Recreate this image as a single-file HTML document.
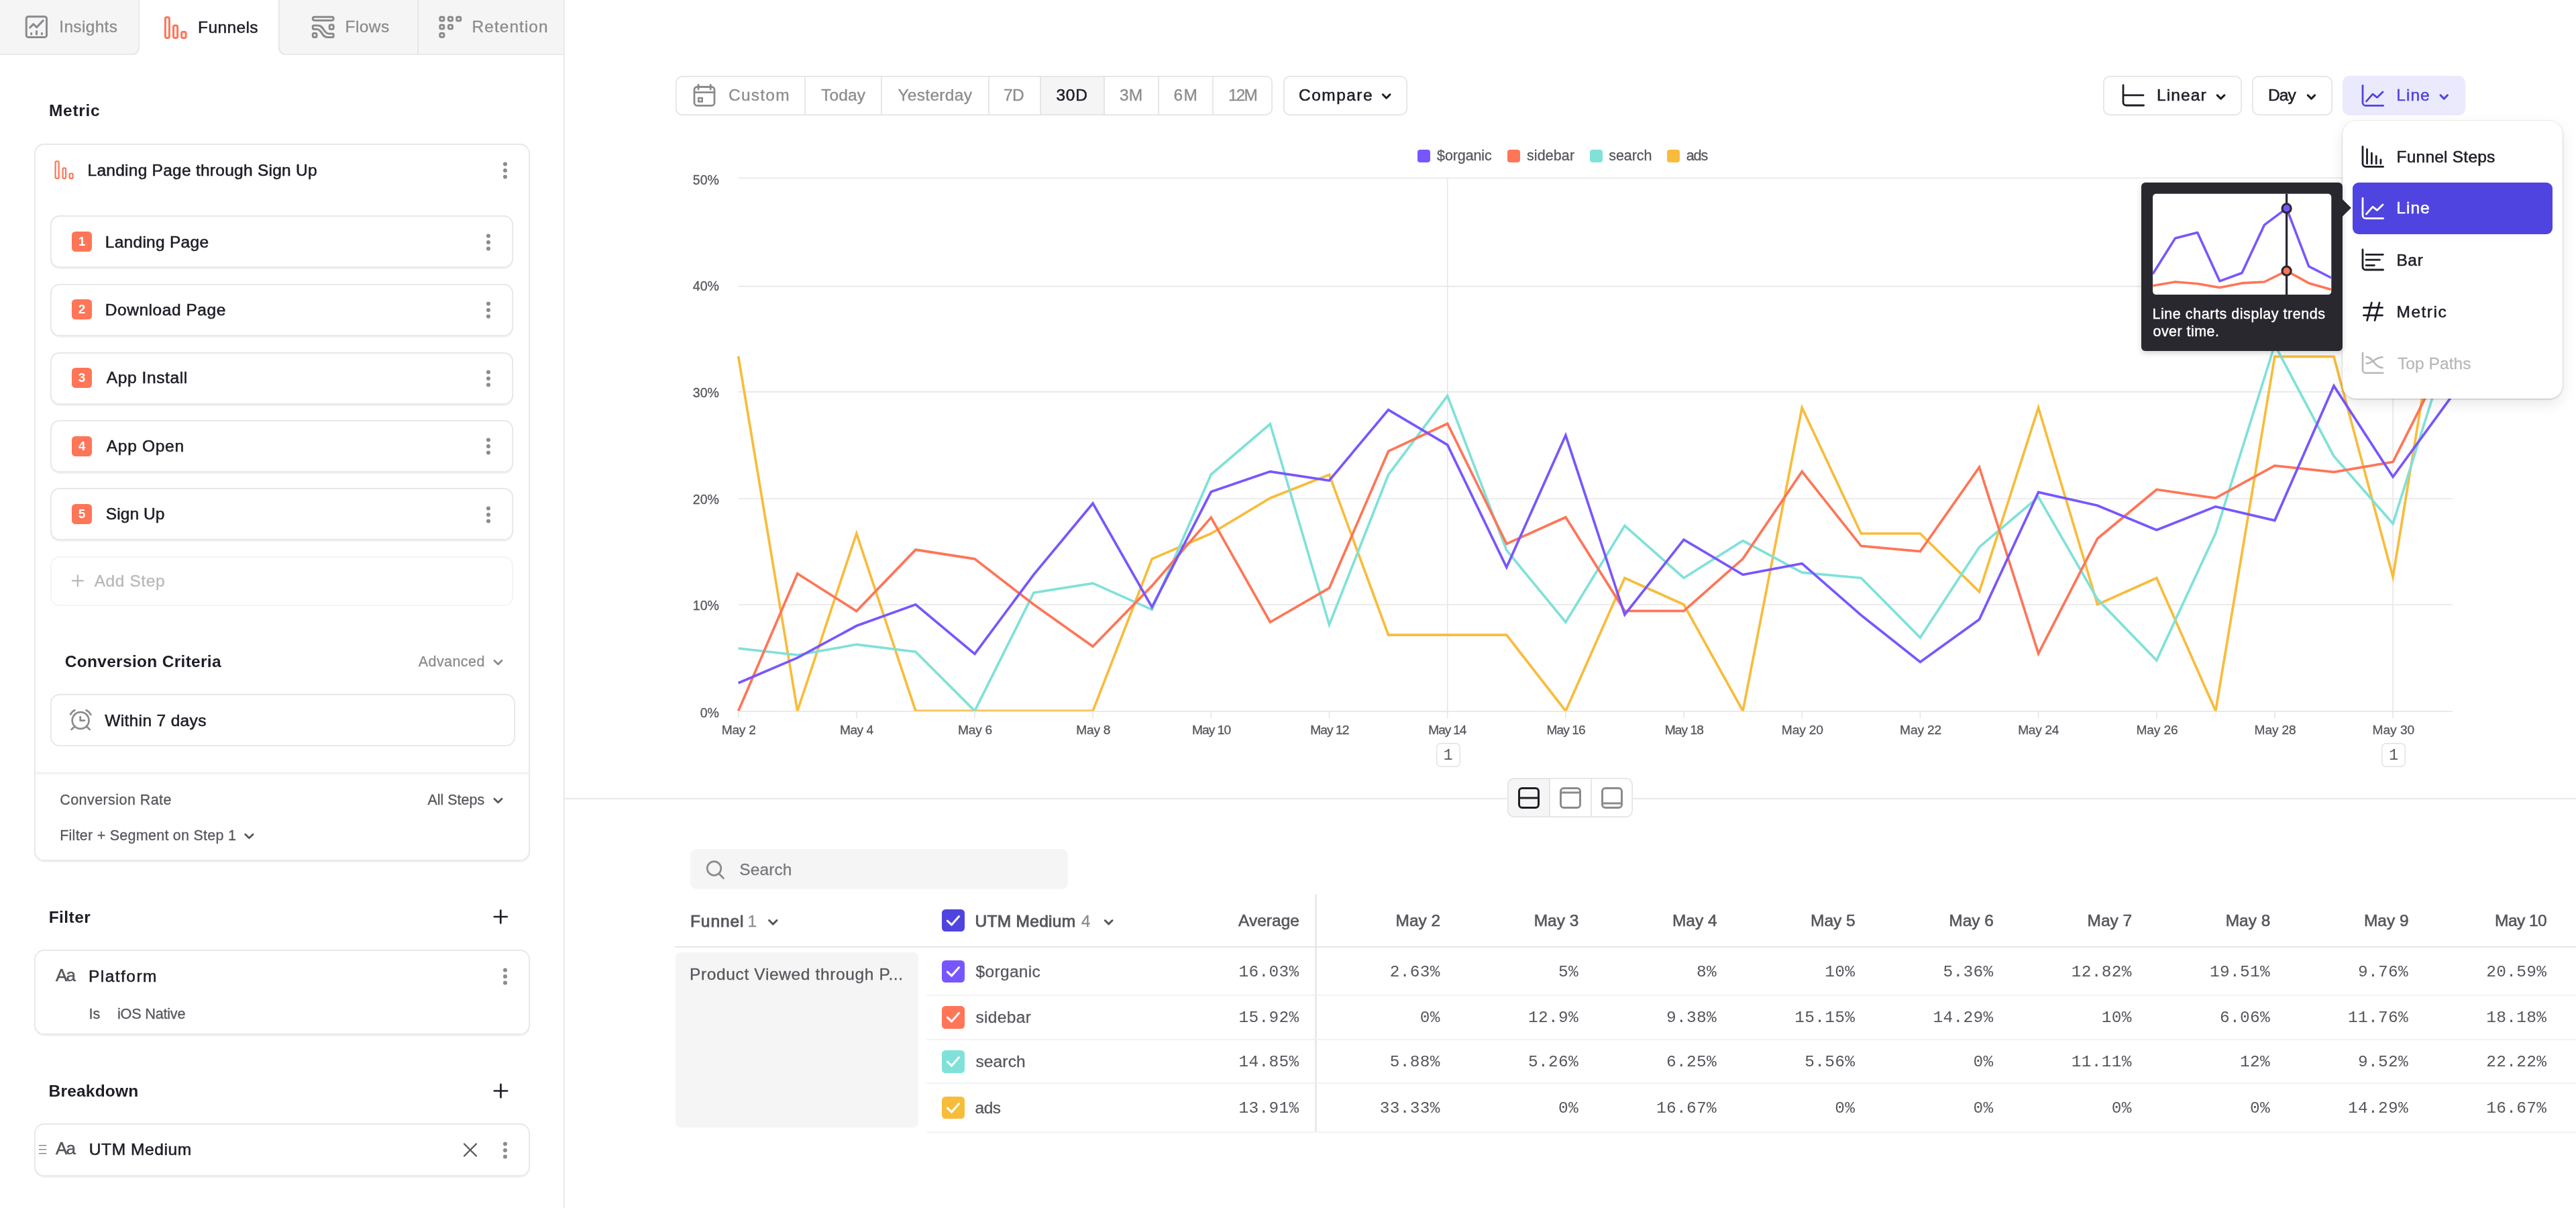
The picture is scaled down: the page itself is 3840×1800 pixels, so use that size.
<!DOCTYPE html>
<html lang="en"><head><meta charset="utf-8"><title>Funnels</title>
<style>
html,body{margin:0;padding:0;background:#fff}
body{width:3840px;height:1800px;overflow:hidden;position:relative;font-family:"Liberation Sans",sans-serif}
section{position:absolute;left:0;top:0;width:0;height:0;will-change:transform}
.t{position:absolute;white-space:pre;display:block}
.f-s{font-family:"Liberation Sans",sans-serif}
.f-m{font-family:"Liberation Mono",monospace}
.ic{position:absolute;overflow:visible}
.tab{position:absolute;background:#f5f5f5;box-sizing:border-box}
.sideborder{position:absolute;left:840px;top:0;width:2px;height:1800px;background:#e9e9e9}
.card{position:absolute;box-sizing:border-box;--bc:#e5e5e5;background:#fff;box-shadow:inset 0 0 0 1.7px var(--bc),0 2px 1.5px rgba(0,0,0,.055)}
.card.flat{box-shadow:inset 0 0 0 1.7px var(--bc)}
.step{border-radius:14px}
.badge{position:absolute;width:30px;height:30px;border-radius:5.5px;background:#FF7557;color:#fff;font-weight:700;font-size:19px;line-height:30px;text-align:center}
.btn{position:absolute;box-sizing:border-box;--bc:#e4e4e4;box-shadow:inset 0 0 0 1.7px var(--bc);border-radius:10px;background:#fff}
.vsep{position:absolute;width:0;box-shadow:0 0 0 0.8px #e2e2e2}
.hline{position:absolute;height:0;box-shadow:0 0 0 0.8px #f1f1f1}
.anno{position:absolute;box-sizing:border-box;width:36.2px;height:36px;box-shadow:inset 0 0 0 1.5px #e2e2e2;border-radius:6.5px;background:#fff}
.cb{position:absolute;width:33.8px;height:33.6px;border-radius:5.5px}
.menu{position:absolute;box-sizing:border-box;background:#fff;border-radius:20px;box-shadow:0 0 0 1px rgba(0,0,0,.05),0 1px 2.5px rgba(0,0,0,.2),0 8px 22px rgba(0,0,0,.09)}
.tip{position:absolute;background:#2a282f;border-radius:6px;box-shadow:0 3px 8px rgba(0,0,0,.18)}
</style></head>
<body>
<section class="sidebar">
<div class="tab" style="left:0;top:0;width:207.6px;height:82.3px;box-shadow:inset -1.6px -1.6px 0 #e6e6e6;border-bottom-right-radius:11px"></div>
<div class="tab" style="left:414.6px;top:0;width:426.4px;height:82.3px;box-shadow:inset 1.6px -1.6px 0 #e6e6e6;border-bottom-left-radius:11px"></div>
<div class="vsep" style="left:623.2px;top:0;height:80px"></div>
<div class="sideborder"></div>
<svg class="ic" style="left:36px;top:22px" width="37" height="37" viewBox="36 22 37 37" ><g fill="none" stroke="#8b8b8e" stroke-width="3" stroke-linecap="round" stroke-linejoin="round"><rect x="39.2" y="24.8" width="30.3" height="30.6" rx="3"/><polyline points="44.6,41.2 49.8,35.9 54.7,40.6 64.3,30.6"/><path d="M46.7,49.6V51M54.5,46.6V51M62.4,49.6V51"/></g></svg>
<svg class="ic" style="left:243px;top:22px" width="38" height="38" viewBox="243 22 38 38" ><g fill="none" stroke="#FF7557" stroke-width="3"><rect x="246.4" y="25.7" width="6" height="30.8" rx="2.2"/><rect x="258.5" y="38.1" width="6.1" height="18.4" rx="2.2"/><rect x="270.6" y="47.4" width="6.5" height="9.1" rx="2.2"/></g></svg>
<svg class="ic" style="left:463px;top:22px" width="38" height="37" viewBox="463 22 38 37" ><g fill="none" stroke="#8b8b8e" stroke-width="3" stroke-linejoin="round"><rect x="466.3" y="25.2" width="30.9" height="5.2" rx="2.6"/><rect x="491.2" y="37.1" width="6" height="6.4" rx="2"/><rect x="466.3" y="49.5" width="5.7" height="6" rx="2"/><path d="M468,37.9H474C483,37.9 482,50.3 490.5,50.3H495.7a1.5,1.5 0 0 1 1.5,1.5V54a1.5,1.5 0 0 1 -1.5,1.5H488C479,55.5 480.5,43.5 472,43.5H468a1.7,1.7 0 0 1 -1.7,-1.7V39.6a1.7,1.7 0 0 1 1.7,-1.7Z"/></g></svg>
<svg class="ic" style="left:652px;top:22px" width="38" height="37" viewBox="652 22 38 37" ><g fill="none" stroke="#8b8b8e" stroke-width="3"><rect x="655.8" y="25.2" width="6.1" height="5.8" rx="2"/><rect x="668.4" y="25.2" width="6.1" height="5.8" rx="2"/><rect x="680.7" y="25.2" width="6.1" height="5.8" rx="2"/><rect x="655.8" y="37.3" width="6.1" height="5.8" rx="2"/><rect x="668.4" y="37.3" width="6.1" height="5.8" rx="2"/><rect x="655.8" y="49.5" width="6.1" height="5.8" rx="2"/></g></svg>
<div class="card" style="left:51px;top:213.5px;width:738.5px;height:1069px;border-radius:15px"></div>
<svg class="ic" style="left:79px;top:237px" width="33" height="32" viewBox="79 237 33 32" ><g fill="none" stroke="#FF7557" stroke-width="2.2"><rect x="82.6" y="240.3" width="5.1" height="25.6" rx="1.8"/><rect x="93.6" y="250.3" width="4.5" height="15.6" rx="1.8"/><rect x="103.6" y="258.5" width="5.1" height="7.4" rx="1.8"/></g></svg>
<svg class="ic" style="left:747.7px;top:240px" width="10" height="28" viewBox="747.7 240 10 28" ><g fill="#8b8b8e"><circle cx="752.7" cy="244.5" r="3"/><circle cx="752.7" cy="254" r="3"/><circle cx="752.7" cy="263.5" r="3"/></g></svg>
<div class="card step" style="left:75.3px;top:321.00px;width:689.4px;height:78px"></div>
<div class="badge" style="left:107px;top:345.10px">1</div>
<svg class="ic" style="left:723.4px;top:346.70000000000005px" width="10" height="28" viewBox="723.4 346.70000000000005 10 28" ><g fill="#8b8b8e"><circle cx="728.4" cy="351.20000000000005" r="3"/><circle cx="728.4" cy="360.70000000000005" r="3"/><circle cx="728.4" cy="370.20000000000005" r="3"/></g></svg>
<div class="card step" style="left:75.3px;top:422.60px;width:689.4px;height:78px"></div>
<div class="badge" style="left:107px;top:446.20px">2</div>
<svg class="ic" style="left:723.4px;top:447.8px" width="10" height="28" viewBox="723.4 447.8 10 28" ><g fill="#8b8b8e"><circle cx="728.4" cy="452.3" r="3"/><circle cx="728.4" cy="461.8" r="3"/><circle cx="728.4" cy="471.3" r="3"/></g></svg>
<div class="card step" style="left:75.3px;top:525.00px;width:689.4px;height:78px"></div>
<div class="badge" style="left:107px;top:548.40px">3</div>
<svg class="ic" style="left:723.4px;top:550.0px" width="10" height="28" viewBox="723.4 550.0 10 28" ><g fill="#8b8b8e"><circle cx="728.4" cy="554.5" r="3"/><circle cx="728.4" cy="564.0" r="3"/><circle cx="728.4" cy="573.5" r="3"/></g></svg>
<div class="card step" style="left:75.3px;top:626.20px;width:689.4px;height:78px"></div>
<div class="badge" style="left:107px;top:649.60px">4</div>
<svg class="ic" style="left:723.4px;top:651.2px" width="10" height="28" viewBox="723.4 651.2 10 28" ><g fill="#8b8b8e"><circle cx="728.4" cy="655.7" r="3"/><circle cx="728.4" cy="665.2" r="3"/><circle cx="728.4" cy="674.7" r="3"/></g></svg>
<div class="card step" style="left:75.3px;top:727.40px;width:689.4px;height:78px"></div>
<div class="badge" style="left:107px;top:751.00px">5</div>
<svg class="ic" style="left:723.4px;top:752.6px" width="10" height="28" viewBox="723.4 752.6 10 28" ><g fill="#8b8b8e"><circle cx="728.4" cy="757.1" r="3"/><circle cx="728.4" cy="766.6" r="3"/><circle cx="728.4" cy="776.1" r="3"/></g></svg>
<div class="card flat" style="left:75.3px;top:828.7px;width:689.4px;height:74px;--bc:#f3f3f3;border-radius:14px"></div>
<svg class="ic" style="left:105px;top:854px" width="22" height="22" viewBox="105 854 22 22" ><path d="M107.8,865.4H124M115.9,857.3V873.5" fill="none" stroke="#b7b7ba" stroke-width="2.2" stroke-linecap="round"/></svg>
<svg class="ic" style="left:732px;top:979px" width="20" height="16" viewBox="732 979 20 16" ><polyline points="736.9,984.2 742.5,989.8 748.1,984.2" fill="none" stroke="#8b8b8e" stroke-width="2.8" stroke-linecap="round" stroke-linejoin="round"/></svg>
<div class="card flat" style="left:75.3px;top:1034.3px;width:693.2px;height:77.5px;border-radius:14px"></div>
<svg class="ic" style="left:102px;top:1055px" width="36" height="35" viewBox="102 1055 36 35" ><g fill="none" stroke="#8b8b8e" stroke-width="2.7" stroke-linecap="round" stroke-linejoin="round"><circle cx="120.1" cy="1073.5" r="12.4"/><path d="M119.7,1068V1073.7H126"/><path d="M105,1064.6Q107.5,1060 111.4,1058.2M128.6,1058.2Q133,1060.4 135.4,1064.8"/><path d="M111,1082.8L106.6,1087M129.4,1082.8L133.7,1087"/></g></svg>
<div style="position:absolute;left:52.5px;top:1150px;width:735.5px;height:3.8px;background:#f4f4f4"></div>
<svg class="ic" style="left:732px;top:1185px" width="20" height="16" viewBox="732 1185 20 16" ><polyline points="736.9,1190.2 742.5,1195.8 748.1,1190.2" fill="none" stroke="#56575d" stroke-width="2.8" stroke-linecap="round" stroke-linejoin="round"/></svg>
<svg class="ic" style="left:361px;top:1238px" width="20" height="16" viewBox="361 1238 20 16" ><polyline points="365.7,1243.15 371.4,1248.85 377.1,1243.15" fill="none" stroke="#56575d" stroke-width="2.8" stroke-linecap="round" stroke-linejoin="round"/></svg>
<svg class="ic" style="left:734px;top:1354px" width="25" height="25" viewBox="734 1354 25 25" ><path d="M736.8,1366H755.8M746.3,1356.5V1375.5" fill="none" stroke="#1d1d26" stroke-width="2.7" stroke-linecap="round"/></svg>
<div class="card" style="left:51px;top:1415.3px;width:738.5px;height:127px;border-radius:15px"></div>
<svg class="ic" style="left:748px;top:1441px" width="10" height="28" viewBox="748 1441 10 28" ><g fill="#8b8b8e"><circle cx="753" cy="1445.5" r="3"/><circle cx="753" cy="1455" r="3"/><circle cx="753" cy="1464.5" r="3"/></g></svg>
<svg class="ic" style="left:734px;top:1613px" width="25" height="25" viewBox="734 1613 25 25" ><path d="M736.8,1625.5H756.2M746.5,1615.8V1635.2" fill="none" stroke="#1d1d26" stroke-width="2.7" stroke-linecap="round"/></svg>
<div class="card" style="left:51px;top:1673.8px;width:738.5px;height:79.3px;border-radius:15px"></div>
<svg class="ic" style="left:56px;top:1704px" width="16" height="20" viewBox="56 1704 16 20" ><path d="M58,1706.8H69.3M58,1712.8H69.3M58,1718.8H69.3" stroke="#8b8b8e" stroke-width="1.6" fill="none"/></svg>
<svg class="ic" style="left:688px;top:1701px" width="26" height="26" viewBox="688 1701 26 26" ><path d="M692,1704.5L710,1722.5M710,1704.5L692,1722.5" stroke="#56575d" stroke-width="2.3" stroke-linecap="round" fill="none"/></svg>
<svg class="ic" style="left:747.6px;top:1699.5px" width="10" height="28" viewBox="747.6 1699.5 10 28" ><g fill="#8b8b8e"><circle cx="752.6" cy="1704.0" r="3"/><circle cx="752.6" cy="1713.5" r="3"/><circle cx="752.6" cy="1723.0" r="3"/></g></svg>
<span class="t f-s" style="left:88.30px;top:21.48px;font-size:24.5px;line-height:37px;color:#8b8b8e;letter-spacing:0.317px;-webkit-text-stroke:0.3px #8b8b8e;">Insights</span>
<span class="t f-s" style="left:295.10px;top:22.08px;font-size:24.5px;line-height:37px;color:#1d1d26;letter-spacing:0.365px;-webkit-text-stroke:0.5px #1d1d26;">Funnels</span>
<span class="t f-s" style="left:514.50px;top:21.48px;font-size:24.5px;line-height:37px;color:#8b8b8e;letter-spacing:0.443px;-webkit-text-stroke:0.3px #8b8b8e;">Flows</span>
<span class="t f-s" style="left:703.60px;top:21.48px;font-size:24.5px;line-height:37px;color:#8b8b8e;letter-spacing:1.018px;-webkit-text-stroke:0.3px #8b8b8e;">Retention</span>
<span class="t f-s" style="left:73.00px;top:146.38px;font-size:24.5px;line-height:37px;color:#1d1d26;font-weight:700;letter-spacing:0.693px;">Metric</span>
<span class="t f-s" style="left:130.50px;top:235.38px;font-size:24.5px;line-height:37px;color:#1d1d26;letter-spacing:0.260px;-webkit-text-stroke:0.55px #1d1d26;">Landing Page through Sign Up</span>
<span class="t f-s" style="left:156.80px;top:342.48px;font-size:24.5px;line-height:37px;color:#1d1d26;letter-spacing:0.273px;-webkit-text-stroke:0.55px #1d1d26;">Landing Page</span>
<span class="t f-s" style="left:156.80px;top:443.28px;font-size:24.5px;line-height:37px;color:#1d1d26;letter-spacing:0.545px;-webkit-text-stroke:0.55px #1d1d26;">Download Page</span>
<span class="t f-s" style="left:158.80px;top:544.48px;font-size:24.5px;line-height:37px;color:#1d1d26;letter-spacing:0.604px;-webkit-text-stroke:0.55px #1d1d26;">App Install</span>
<span class="t f-s" style="left:158.80px;top:645.78px;font-size:24.5px;line-height:37px;color:#1d1d26;letter-spacing:0.699px;-webkit-text-stroke:0.55px #1d1d26;">App Open</span>
<span class="t f-s" style="left:157.80px;top:747.08px;font-size:24.5px;line-height:37px;color:#1d1d26;letter-spacing:0.077px;-webkit-text-stroke:0.55px #1d1d26;">Sign Up</span>
<span class="t f-s" style="left:140.70px;top:847.38px;font-size:24.5px;line-height:37px;color:#b7b7ba;letter-spacing:0.589px;-webkit-text-stroke:0.3px #b7b7ba;">Add Step</span>
<span class="t f-s" style="left:96.70px;top:967.38px;font-size:24.5px;line-height:37px;color:#1d1d26;font-weight:700;letter-spacing:0.309px;">Conversion Criteria</span>
<span class="t f-s" style="left:623.80px;top:970.05px;font-size:21.5px;line-height:32px;color:#8b8b8e;letter-spacing:0.419px;-webkit-text-stroke:0.3px #8b8b8e;">Advanced</span>
<span class="t f-s" style="left:156.20px;top:1055.48px;font-size:24.5px;line-height:37px;color:#1d1d26;letter-spacing:0.349px;-webkit-text-stroke:0.55px #1d1d26;">Within 7 days</span>
<span class="t f-s" style="left:89.20px;top:1176.05px;font-size:21.5px;line-height:32px;color:#56575d;letter-spacing:0.437px;-webkit-text-stroke:0.3px #56575d;">Conversion Rate</span>
<span class="t f-s" style="left:637.40px;top:1176.05px;font-size:21.5px;line-height:32px;color:#56575d;letter-spacing:-0.012px;-webkit-text-stroke:0.3px #56575d;">All Steps</span>
<span class="t f-s" style="left:89.20px;top:1228.85px;font-size:21.5px;line-height:32px;color:#56575d;letter-spacing:0.256px;-webkit-text-stroke:0.3px #56575d;">Filter + Segment on Step 1</span>
<span class="t f-s" style="left:72.70px;top:1347.98px;font-size:24.5px;line-height:37px;color:#1d1d26;font-weight:700;letter-spacing:0.447px;">Filter</span>
<span class="t f-s" style="left:83.00px;top:1433.60px;font-size:26px;line-height:39px;color:#56575d;letter-spacing:-1.742px;-webkit-text-stroke:0.5px #56575d;">Aa</span>
<span class="t f-s" style="left:132.00px;top:1435.98px;font-size:24.5px;line-height:37px;color:#1d1d26;letter-spacing:1.456px;-webkit-text-stroke:0.55px #1d1d26;">Platform</span>
<span class="t f-s" style="left:132.40px;top:1494.35px;font-size:21.7px;line-height:33px;color:#56575d;-webkit-text-stroke:0.3px #56575d;">Is</span>
<span class="t f-s" style="left:174.90px;top:1494.35px;font-size:21.7px;line-height:33px;color:#56575d;letter-spacing:-0.221px;-webkit-text-stroke:0.3px #56575d;">iOS Native</span>
<span class="t f-s" style="left:72.50px;top:1607.18px;font-size:24.5px;line-height:37px;color:#1d1d26;font-weight:700;letter-spacing:0.213px;">Breakdown</span>
<span class="t f-s" style="left:83.00px;top:1692.40px;font-size:26px;line-height:39px;color:#56575d;letter-spacing:-1.742px;-webkit-text-stroke:0.5px #56575d;">Aa</span>
<span class="t f-s" style="left:132.80px;top:1694.18px;font-size:24.5px;line-height:37px;color:#1d1d26;letter-spacing:0.600px;-webkit-text-stroke:0.55px #1d1d26;">UTM Medium</span>
</section>
<section class="toolbar">
<div style="position:absolute;left:1550.5px;top:113px;width:95.1px;height:58.5px;background:#f5f5f5"></div>
<div class="btn" style="left:1007px;top:112.8px;width:890.3px;height:59px;background:transparent"></div>
<div class="vsep" style="left:1200.20px;top:115px;height:54.6px"></div>
<div class="vsep" style="left:1314.10px;top:115px;height:54.6px"></div>
<div class="vsep" style="left:1473.50px;top:115px;height:54.6px"></div>
<div class="vsep" style="left:1550.50px;top:115px;height:54.6px"></div>
<div class="vsep" style="left:1645.60px;top:115px;height:54.6px"></div>
<div class="vsep" style="left:1726.60px;top:115px;height:54.6px"></div>
<div class="vsep" style="left:1808.10px;top:115px;height:54.6px"></div>
<svg class="ic" style="left:1031px;top:124px" width="38" height="37" viewBox="1031 124 38 37" ><g fill="none" stroke="#8b8b8e" stroke-width="2.8" stroke-linecap="round" stroke-linejoin="round"><rect x="1035" y="129.5" width="30" height="27.8" rx="4"/><path d="M1041,126.5V133M1059.2,126.5V133M1035,137.6H1065"/><rect x="1041.3" y="146" width="5.4" height="5.4" stroke-width="2.6" stroke-linejoin="miter"/></g></svg>
<div class="btn" style="left:1912.5px;top:112.8px;width:185.7px;height:59px"></div>
<svg class="ic" style="left:2057px;top:136px" width="20" height="16" viewBox="2057 136 20 16" ><polyline points="2061.3,140.80000000000007 2066.7,146.19999999999993 2072.1,140.80000000000007" fill="none" stroke="#1d1d26" stroke-width="3.0" stroke-linecap="round" stroke-linejoin="round"/></svg>
<div class="btn" style="left:3135.3px;top:112.8px;width:206.5px;height:59px"></div>
<svg class="ic" style="left:3161px;top:123px" width="38" height="38" viewBox="3161 123 38 38" ><g fill="none" stroke="#1d1d26" stroke-width="2.8" stroke-linecap="round" stroke-linejoin="round"><path d="M3165,127V152.5a4.5,4.5 0 0 0 4.5,4.5H3195.6M3166.8,141.9H3195"/></g></svg>
<svg class="ic" style="left:3301px;top:136px" width="20" height="16" viewBox="3301 136 20 16" ><polyline points="3305.2,141.82499999999993 3310.55,147.17500000000007 3315.9,141.82499999999993" fill="none" stroke="#1d1d26" stroke-width="3.0" stroke-linecap="round" stroke-linejoin="round"/></svg>
<div class="btn" style="left:3357.3px;top:112.8px;width:119.5px;height:59px"></div>
<svg class="ic" style="left:3436px;top:136px" width="20" height="16" viewBox="3436 136 20 16" ><polyline points="3440.2,141.875 3445.45,147.125 3450.7,141.875" fill="none" stroke="#1d1d26" stroke-width="3.0" stroke-linecap="round" stroke-linejoin="round"/></svg>
<div class="btn" style="left:3492px;top:112.8px;width:183px;height:59.3px;--bc:transparent;background:#ebe9fc"></div>
<svg class="ic" style="left:3518px;top:123px" width="38" height="38" viewBox="3518 123 38 38" ><g fill="none" stroke="#4F44E0" stroke-width="2.8" stroke-linecap="round" stroke-linejoin="round"><path d="M3522,127.3V152.9a4.5,4.5 0 0 0 4.5,4.5H3552.6"/><polyline points="3527.5,150.9 3537,140.1 3543.6,145.3 3552,136.9"/></g></svg>
<svg class="ic" style="left:3634px;top:136px" width="19" height="16" viewBox="3634 136 19 16" ><polyline points="3638.1,141.92499999999995 3643.25,147.07500000000005 3648.4,141.92499999999995" fill="none" stroke="#4F44E0" stroke-width="3.0" stroke-linecap="round" stroke-linejoin="round"/></svg>
<span class="t f-s" style="left:1086.00px;top:122.98px;font-size:24.5px;line-height:37px;color:#8b8b8e;letter-spacing:1.240px;-webkit-text-stroke:0.3px #8b8b8e;">Custom</span>
<span class="t f-s" style="left:1224.00px;top:122.98px;font-size:24.5px;line-height:37px;color:#8b8b8e;letter-spacing:0.143px;-webkit-text-stroke:0.3px #8b8b8e;">Today</span>
<span class="t f-s" style="left:1338.40px;top:122.98px;font-size:24.5px;line-height:37px;color:#8b8b8e;letter-spacing:0.311px;-webkit-text-stroke:0.3px #8b8b8e;">Yesterday</span>
<span class="t f-s" style="left:1496.00px;top:122.98px;font-size:24.5px;line-height:37px;color:#8b8b8e;letter-spacing:-0.626px;-webkit-text-stroke:0.3px #8b8b8e;">7D</span>
<span class="t f-s" style="left:1669.00px;top:122.98px;font-size:24.5px;line-height:37px;color:#8b8b8e;letter-spacing:0.174px;-webkit-text-stroke:0.3px #8b8b8e;">3M</span>
<span class="t f-s" style="left:1749.50px;top:122.98px;font-size:24.5px;line-height:37px;color:#8b8b8e;letter-spacing:1.274px;-webkit-text-stroke:0.3px #8b8b8e;">6M</span>
<span class="t f-s" style="left:1831.00px;top:122.98px;font-size:24.5px;line-height:37px;color:#8b8b8e;letter-spacing:-1.926px;-webkit-text-stroke:0.3px #8b8b8e;">12M</span>
<span class="t f-s" style="left:1574.40px;top:122.98px;font-size:24.5px;line-height:37px;color:#1d1d26;letter-spacing:0.824px;-webkit-text-stroke:0.55px #1d1d26;">30D</span>
<span class="t f-s" style="left:1936.00px;top:122.98px;font-size:24.5px;line-height:37px;color:#1d1d26;letter-spacing:1.477px;-webkit-text-stroke:0.55px #1d1d26;">Compare</span>
<span class="t f-s" style="left:3214.90px;top:122.98px;font-size:24.5px;line-height:37px;color:#1d1d26;letter-spacing:1.151px;-webkit-text-stroke:0.55px #1d1d26;">Linear</span>
<span class="t f-s" style="left:3380.90px;top:122.98px;font-size:24.5px;line-height:37px;color:#1d1d26;letter-spacing:-0.859px;-webkit-text-stroke:0.55px #1d1d26;">Day</span>
<span class="t f-s" style="left:3572.20px;top:122.98px;font-size:24.5px;line-height:37px;color:#4F44E0;letter-spacing:1.068px;-webkit-text-stroke:0.55px #4F44E0;">Line</span>
</section>
<section class="legend">
<div style="position:absolute;left:2113px;top:223px;width:18.8px;height:18.8px;border-radius:4px;background:#7856FF"></div>
<div style="position:absolute;left:2247.3px;top:223px;width:18.8px;height:18.8px;border-radius:4px;background:#FF7557"></div>
<div style="position:absolute;left:2369.8px;top:223px;width:18.8px;height:18.8px;border-radius:4px;background:#80E1D9"></div>
<div style="position:absolute;left:2485.3px;top:223px;width:18.8px;height:18.8px;border-radius:4px;background:#F8BC3B"></div>
<span class="t f-s" style="left:2142.10px;top:216.05px;font-size:21.5px;line-height:32px;color:#56575d;letter-spacing:-0.118px;-webkit-text-stroke:0.3px #56575d;">$organic</span>
<span class="t f-s" style="left:2276.00px;top:216.05px;font-size:21.5px;line-height:32px;color:#56575d;letter-spacing:0.091px;-webkit-text-stroke:0.3px #56575d;">sidebar</span>
<span class="t f-s" style="left:2398.30px;top:216.05px;font-size:21.5px;line-height:32px;color:#56575d;letter-spacing:-0.095px;-webkit-text-stroke:0.3px #56575d;">search</span>
<span class="t f-s" style="left:2513.80px;top:216.05px;font-size:21.5px;line-height:32px;color:#56575d;letter-spacing:-1.157px;-webkit-text-stroke:0.3px #56575d;">ads</span>
</section>
<section class="chart">
<svg class="ic" style="left:1000px;top:200px" width="2840" height="900" viewBox="1000 200 2840 900"><clipPath id="cc"><rect x="1090" y="200" width="2600" height="859.4"/></clipPath><line x1="1100.7" x2="3656" y1="1060.1" y2="1060.1" stroke="#e6e6e6" stroke-width="1.6"/><line x1="1100.7" x2="3656" y1="901.0" y2="901.0" stroke="#e6e6e6" stroke-width="1.6"/><line x1="1100.7" x2="3656" y1="743.0" y2="743.0" stroke="#e6e6e6" stroke-width="1.6"/><line x1="1100.7" x2="3656" y1="583.9" y2="583.9" stroke="#e6e6e6" stroke-width="1.6"/><line x1="1100.7" x2="3656" y1="426.6" y2="426.6" stroke="#e6e6e6" stroke-width="1.6"/><line x1="1100.7" x2="3656" y1="265.3" y2="265.3" stroke="#e6e6e6" stroke-width="1.6"/><line x1="2157.7" x2="2157.7" y1="265" y2="1060.3" stroke="#e6e6e6" stroke-width="1.6"/><line x1="3567.1" x2="3567.1" y1="265" y2="1060.3" stroke="#e6e6e6" stroke-width="1.6"/><line x1="1100.6" x2="1100.6" y1="1060.3" y2="1070.3" stroke="#e6e6e6" stroke-width="1.6"/><line x1="1276.8" x2="1276.8" y1="1060.3" y2="1070.3" stroke="#e6e6e6" stroke-width="1.6"/><line x1="1453.0" x2="1453.0" y1="1060.3" y2="1070.3" stroke="#e6e6e6" stroke-width="1.6"/><line x1="1629.1" x2="1629.1" y1="1060.3" y2="1070.3" stroke="#e6e6e6" stroke-width="1.6"/><line x1="1805.3" x2="1805.3" y1="1060.3" y2="1070.3" stroke="#e6e6e6" stroke-width="1.6"/><line x1="1981.5" x2="1981.5" y1="1060.3" y2="1070.3" stroke="#e6e6e6" stroke-width="1.6"/><line x1="2157.7" x2="2157.7" y1="1060.3" y2="1070.3" stroke="#e6e6e6" stroke-width="1.6"/><line x1="2333.9" x2="2333.9" y1="1060.3" y2="1070.3" stroke="#e6e6e6" stroke-width="1.6"/><line x1="2510.0" x2="2510.0" y1="1060.3" y2="1070.3" stroke="#e6e6e6" stroke-width="1.6"/><line x1="2686.2" x2="2686.2" y1="1060.3" y2="1070.3" stroke="#e6e6e6" stroke-width="1.6"/><line x1="2862.4" x2="2862.4" y1="1060.3" y2="1070.3" stroke="#e6e6e6" stroke-width="1.6"/><line x1="3038.6" x2="3038.6" y1="1060.3" y2="1070.3" stroke="#e6e6e6" stroke-width="1.6"/><line x1="3214.8" x2="3214.8" y1="1060.3" y2="1070.3" stroke="#e6e6e6" stroke-width="1.6"/><line x1="3390.9" x2="3390.9" y1="1060.3" y2="1070.3" stroke="#e6e6e6" stroke-width="1.6"/><line x1="3567.1" x2="3567.1" y1="1060.3" y2="1070.3" stroke="#e6e6e6" stroke-width="1.6"/><polyline points="1100.6,530.8 1188.7,1059.4 1276.8,795.0 1364.9,1059.4 1453.0,1059.4 1541.0,1059.4 1629.1,1059.4 1717.2,832.8 1805.3,795.0 1893.4,742.2 1981.5,707.3 2069.6,946.2 2157.7,946.2 2245.8,946.2 2333.9,1059.4 2421.9,861.2 2510.0,900.8 2598.1,1059.4 2686.2,607.4 2774.3,795.0 2862.4,795.0 2950.5,881.8 3038.6,607.4 3126.7,900.8 3214.8,861.2 3302.8,1059.4 3390.9,531.3 3479.0,531.3 3567.1,859.6 3655.2,320.3" fill="none" stroke="#F8BC3B" stroke-width="3.7" stroke-linejoin="miter" stroke-miterlimit="10" clip-path="url(#cc)"/><polyline points="1100.6,966.1 1188.7,976.0 1276.8,960.3 1364.9,971.2 1453.0,1059.4 1541.0,883.2 1629.1,869.1 1717.2,908.4 1805.3,707.0 1893.4,631.8 1981.5,930.9 2069.6,707.3 2157.7,589.9 2245.8,819.9 2333.9,927.0 2421.9,783.4 2510.0,861.2 2598.1,805.6 2686.2,853.2 2774.3,861.2 2862.4,950.0 2950.5,815.2 3038.6,740.6 3126.7,892.9 3214.8,984.1 3302.8,794.5 3390.9,513.8 3479.0,679.6 3567.1,780.3 3655.2,499.5" fill="none" stroke="#80E1D9" stroke-width="3.7" stroke-linejoin="miter" stroke-miterlimit="10" clip-path="url(#cc)"/><polyline points="1100.6,1059.4 1188.7,854.8 1276.8,910.6 1364.9,819.1 1453.0,832.8 1541.0,900.8 1629.1,963.3 1717.2,872.9 1805.3,771.1 1893.4,927.0 1981.5,876.2 2069.6,672.4 2157.7,631.2 2245.8,810.4 2333.9,770.7 2421.9,910.3 2510.0,910.3 2598.1,832.6 2686.2,702.6 2774.3,813.6 2862.4,821.5 2950.5,696.2 3038.6,973.8 3126.7,802.5 3214.8,729.5 3302.8,742.2 3390.9,693.8 3479.0,703.3 3567.1,688.3 3655.2,513.8" fill="none" stroke="#FF7557" stroke-width="3.7" stroke-linejoin="miter" stroke-miterlimit="10" clip-path="url(#cc)"/><polyline points="1100.6,1017.7 1188.7,980.1 1276.8,932.5 1364.9,900.8 1453.0,974.4 1541.0,856.1 1629.1,750.0 1717.2,904.6 1805.3,732.8 1893.4,702.6 1981.5,716.0 2069.6,610.6 2157.7,662.9 2245.8,845.3 2333.9,648.6 2421.9,916.0 2510.0,804.1 2598.1,856.4 2686.2,839.7 2774.3,916.7 2862.4,986.4 2950.5,923.0 3038.6,733.5 3126.7,753.3 3214.8,789.8 3302.8,754.9 3390.9,775.5 3479.0,574.9 3567.1,710.5 3655.2,589.9" fill="none" stroke="#7856FF" stroke-width="3.7" stroke-linejoin="miter" stroke-miterlimit="10" clip-path="url(#cc)"/></svg>
<div class="anno" style="left:2140.7px;top:1107px"></div>
<div class="anno" style="left:3550.1px;top:1107px"></div>
<span class="t f-s" style="left:1043.70px;top:1047.63px;font-size:19.6px;line-height:29px;color:#56575d;-webkit-text-stroke:0.3px #56575d;">0%</span>
<span class="t f-s" style="left:1032.81px;top:888.13px;font-size:19.6px;line-height:29px;color:#56575d;-webkit-text-stroke:0.3px #56575d;">10%</span>
<span class="t f-s" style="left:1032.81px;top:729.53px;font-size:19.6px;line-height:29px;color:#56575d;-webkit-text-stroke:0.3px #56575d;">20%</span>
<span class="t f-s" style="left:1032.81px;top:571.03px;font-size:19.6px;line-height:29px;color:#56575d;-webkit-text-stroke:0.3px #56575d;">30%</span>
<span class="t f-s" style="left:1032.81px;top:412.03px;font-size:19.6px;line-height:29px;color:#56575d;-webkit-text-stroke:0.3px #56575d;">40%</span>
<span class="t f-s" style="left:1032.81px;top:254.13px;font-size:19.6px;line-height:29px;color:#56575d;-webkit-text-stroke:0.3px #56575d;">50%</span>
<span class="t f-s" style="left:1075.75px;top:1073.22px;font-size:19.2px;line-height:29px;color:#56575d;letter-spacing:-0.270px;-webkit-text-stroke:0.3px #56575d;">May 2</span>
<span class="t f-s" style="left:1251.93px;top:1073.22px;font-size:19.2px;line-height:29px;color:#56575d;letter-spacing:-0.520px;-webkit-text-stroke:0.3px #56575d;">May 4</span>
<span class="t f-s" style="left:1428.11px;top:1073.22px;font-size:19.2px;line-height:29px;color:#56575d;letter-spacing:-0.270px;-webkit-text-stroke:0.3px #56575d;">May 6</span>
<span class="t f-s" style="left:1604.29px;top:1073.22px;font-size:19.2px;line-height:29px;color:#56575d;letter-spacing:-0.270px;-webkit-text-stroke:0.3px #56575d;">May 8</span>
<span class="t f-s" style="left:1776.97px;top:1073.22px;font-size:19.2px;line-height:29px;color:#56575d;letter-spacing:-0.950px;-webkit-text-stroke:0.3px #56575d;">May 10</span>
<span class="t f-s" style="left:1953.15px;top:1073.22px;font-size:19.2px;line-height:29px;color:#56575d;letter-spacing:-0.950px;-webkit-text-stroke:0.3px #56575d;">May 12</span>
<span class="t f-s" style="left:2129.33px;top:1073.22px;font-size:19.2px;line-height:29px;color:#56575d;letter-spacing:-1.150px;-webkit-text-stroke:0.3px #56575d;">May 14</span>
<span class="t f-s" style="left:2305.51px;top:1073.22px;font-size:19.2px;line-height:29px;color:#56575d;letter-spacing:-0.950px;-webkit-text-stroke:0.3px #56575d;">May 16</span>
<span class="t f-s" style="left:2481.69px;top:1073.22px;font-size:19.2px;line-height:29px;color:#56575d;letter-spacing:-0.950px;-webkit-text-stroke:0.3px #56575d;">May 18</span>
<span class="t f-s" style="left:2655.87px;top:1073.22px;font-size:19.2px;line-height:29px;color:#56575d;letter-spacing:-0.150px;-webkit-text-stroke:0.3px #56575d;">May 20</span>
<span class="t f-s" style="left:2832.05px;top:1073.22px;font-size:19.2px;line-height:29px;color:#56575d;letter-spacing:-0.150px;-webkit-text-stroke:0.3px #56575d;">May 22</span>
<span class="t f-s" style="left:3008.23px;top:1073.22px;font-size:19.2px;line-height:29px;color:#56575d;letter-spacing:-0.350px;-webkit-text-stroke:0.3px #56575d;">May 24</span>
<span class="t f-s" style="left:3184.41px;top:1073.22px;font-size:19.2px;line-height:29px;color:#56575d;letter-spacing:-0.150px;-webkit-text-stroke:0.3px #56575d;">May 26</span>
<span class="t f-s" style="left:3360.59px;top:1073.22px;font-size:19.2px;line-height:29px;color:#56575d;letter-spacing:-0.150px;-webkit-text-stroke:0.3px #56575d;">May 28</span>
<span class="t f-s" style="left:3536.52px;top:1073.22px;font-size:19.2px;line-height:29px;color:#56575d;letter-spacing:-0.050px;-webkit-text-stroke:0.3px #56575d;">May 30</span>
<span class="t f-m" style="left:2151.78px;top:1109.46px;font-size:23px;line-height:34px;color:#56575d;">1</span>
<span class="t f-m" style="left:3561.22px;top:1109.46px;font-size:23px;line-height:34px;color:#56575d;">1</span>
</section>
<section class="divider">
<div class="hline" style="left:841px;top:1189.9px;width:2999px;box-shadow:0 0 0 0.8px #e3e3e3"></div>
<div style="position:absolute;left:2247px;top:1158.8px;width:187.4px;height:59.4px;border-radius:10px;background:#fff;overflow:hidden"><div style="position:absolute;left:0;top:0;width:63px;height:60px;background:#f5f5f5"></div></div>
<div class="btn" style="left:2247px;top:1158.8px;width:187.4px;height:59.4px;border-radius:10px;background:transparent"></div>
<div class="vsep" style="left:2310px;top:1161px;height:55px"></div>
<div class="vsep" style="left:2371.7px;top:1161px;height:55px"></div>
<svg class="ic" style="left:2261px;top:1170.8px" width="36" height="36" viewBox="2261 1170.8 36 36" ><g fill="none" stroke="#1d1d26" stroke-width="3"><rect x="2264.5" y="1174.3" width="29" height="29" rx="4.5"/><path d="M2264.5,1188.8H2293.5"/></g></svg>
<svg class="ic" style="left:2322.8px;top:1170.8px" width="36" height="36" viewBox="2322.8 1170.8 36 36" ><g fill="none" stroke="#8b8b8e" stroke-width="3"><rect x="2326.3" y="1174.3" width="29" height="29" rx="4.5"/><path d="M2326.3,1180.8H2355.3"/></g></svg>
<svg class="ic" style="left:2384.8px;top:1170.8px" width="36" height="36" viewBox="2384.8 1170.8 36 36" ><g fill="none" stroke="#8b8b8e" stroke-width="3"><rect x="2388.3" y="1174.3" width="29" height="29" rx="4.5"/><path d="M2388.3,1196.8H2417.3"/></g></svg>

</section>
<section class="table">
<div style="position:absolute;left:1029.3px;top:1265.4px;width:562.5px;height:59.8px;border-radius:10px;background:#f5f5f5"></div>
<svg class="ic" style="left:1050px;top:1281px" width="32" height="32" viewBox="1050 1281 32 32" ><g fill="none" stroke="#8b8b8e" stroke-width="2.7" stroke-linecap="round"><circle cx="1064.5" cy="1294" r="10.3"/><path d="M1072,1302L1078.5,1308.7"/></g></svg>
<svg class="ic" style="left:1142px;top:1366px" width="21" height="16" viewBox="1142 1366 21 16" ><polyline points="1146.5,1371.3000000000002 1152.3,1377.1 1158.1,1371.3000000000002" fill="none" stroke="#56575d" stroke-width="3.0" stroke-linecap="round" stroke-linejoin="round"/></svg>
<div class="cb" style="left:1404.2px;top:1354.8px;background:#4F44E0"></div><svg class="ic" style="left:1404.2px;top:1354.8px" width="34" height="34" viewBox="1404.2 1354.8 34 34" ><polyline points="1412.5,1372.0 1418.8,1377.8 1429.7,1365.3999999999999" fill="none" stroke="#fff" stroke-width="3.1" stroke-linecap="round" stroke-linejoin="round"/></svg>
<svg class="ic" style="left:1643px;top:1366px" width="20" height="16" viewBox="1643 1366 20 16" ><polyline points="1647.3,1371.5 1652.6999999999998,1376.9 1658.1,1371.5" fill="none" stroke="#56575d" stroke-width="3.0" stroke-linecap="round" stroke-linejoin="round"/></svg>
<div class="hline" style="left:1007px;top:1410.9px;width:2833px;box-shadow:0 0 0 0.9px #e4e4e4"></div>
<div style="position:absolute;left:1959.5px;top:1333px;width:3.6px;height:354px;background:#e9e9e9"></div>
<div class="hline" style="left:1382px;top:1483px;width:2458px"></div>
<div class="hline" style="left:1382px;top:1548.5px;width:2458px"></div>
<div class="hline" style="left:1382px;top:1614.2px;width:2458px"></div>
<div class="hline" style="left:1382px;top:1686.6px;width:2458px"></div>
<div style="position:absolute;left:1007px;top:1418.8px;width:361.6px;height:261.4px;border-radius:8px;background:#f5f5f5"></div>
<div class="cb" style="left:1404.2px;top:1430.7px;background:#7856FF"></div><svg class="ic" style="left:1404.2px;top:1430.7px" width="34" height="34" viewBox="1404.2 1430.7 34 34" ><polyline points="1412.5,1447.9 1418.8,1453.7 1429.7,1441.3" fill="none" stroke="#fff" stroke-width="3.1" stroke-linecap="round" stroke-linejoin="round"/></svg>
<div class="cb" style="left:1404.2px;top:1499.0px;background:#FF7557"></div><svg class="ic" style="left:1404.2px;top:1499.0px" width="34" height="34" viewBox="1404.2 1499.0 34 34" ><polyline points="1412.5,1516.2 1418.8,1522.0 1429.7,1509.6" fill="none" stroke="#fff" stroke-width="3.1" stroke-linecap="round" stroke-linejoin="round"/></svg>
<div class="cb" style="left:1404.2px;top:1565.0px;background:#80E1D9"></div><svg class="ic" style="left:1404.2px;top:1565.0px" width="34" height="34" viewBox="1404.2 1565.0 34 34" ><polyline points="1412.5,1582.2 1418.8,1588.0 1429.7,1575.6" fill="none" stroke="#fff" stroke-width="3.1" stroke-linecap="round" stroke-linejoin="round"/></svg>
<div class="cb" style="left:1404.2px;top:1633.7px;background:#F8BC3B"></div><svg class="ic" style="left:1404.2px;top:1633.7px" width="34" height="34" viewBox="1404.2 1633.7 34 34" ><polyline points="1412.5,1650.9 1418.8,1656.7 1429.7,1644.3" fill="none" stroke="#fff" stroke-width="3.1" stroke-linecap="round" stroke-linejoin="round"/></svg>
<span class="t f-s" style="left:1102.20px;top:1277.08px;font-size:24.5px;line-height:37px;color:#77787d;letter-spacing:0.120px;-webkit-text-stroke:0.3px #77787d;">Search</span>
<span class="t f-s" style="left:1029.00px;top:1354.48px;font-size:24.5px;line-height:37px;color:#56575d;letter-spacing:0.906px;-webkit-text-stroke:0.9px #56575d;">Funnel</span>
<span class="t f-s" style="left:1114.50px;top:1354.48px;font-size:24.5px;line-height:37px;color:#8b8b8e;-webkit-text-stroke:0.3px #8b8b8e;">1</span>
<span class="t f-s" style="left:1453.50px;top:1354.48px;font-size:24.5px;line-height:37px;color:#56575d;letter-spacing:0.289px;-webkit-text-stroke:0.9px #56575d;">UTM Medium</span>
<span class="t f-s" style="left:1611.70px;top:1354.48px;font-size:24.5px;line-height:37px;color:#8b8b8e;-webkit-text-stroke:0.3px #8b8b8e;">4</span>
<span class="t f-s" style="left:1846.10px;top:1353.48px;font-size:24.5px;line-height:37px;color:#56575d;-webkit-text-stroke:0.6px #56575d;">Average</span>
<span class="t f-s" style="left:2080.50px;top:1353.48px;font-size:24.5px;line-height:37px;color:#56575d;letter-spacing:-0.023px;-webkit-text-stroke:0.6px #56575d;">May 2</span>
<span class="t f-s" style="left:2286.70px;top:1353.48px;font-size:24.5px;line-height:37px;color:#56575d;letter-spacing:-0.023px;-webkit-text-stroke:0.6px #56575d;">May 3</span>
<span class="t f-s" style="left:2492.90px;top:1353.48px;font-size:24.5px;line-height:37px;color:#56575d;letter-spacing:-0.023px;-webkit-text-stroke:0.6px #56575d;">May 4</span>
<span class="t f-s" style="left:2699.10px;top:1353.48px;font-size:24.5px;line-height:37px;color:#56575d;letter-spacing:-0.023px;-webkit-text-stroke:0.6px #56575d;">May 5</span>
<span class="t f-s" style="left:2905.30px;top:1353.48px;font-size:24.5px;line-height:37px;color:#56575d;letter-spacing:-0.023px;-webkit-text-stroke:0.6px #56575d;">May 6</span>
<span class="t f-s" style="left:3111.50px;top:1353.48px;font-size:24.5px;line-height:37px;color:#56575d;letter-spacing:-0.023px;-webkit-text-stroke:0.6px #56575d;">May 7</span>
<span class="t f-s" style="left:3317.70px;top:1353.48px;font-size:24.5px;line-height:37px;color:#56575d;letter-spacing:-0.023px;-webkit-text-stroke:0.6px #56575d;">May 8</span>
<span class="t f-s" style="left:3523.90px;top:1353.48px;font-size:24.5px;line-height:37px;color:#56575d;letter-spacing:-0.023px;-webkit-text-stroke:0.6px #56575d;">May 9</span>
<span class="t f-s" style="left:3719.10px;top:1353.48px;font-size:24.5px;line-height:37px;color:#56575d;letter-spacing:-0.543px;-webkit-text-stroke:0.6px #56575d;">May 10</span>
<span class="t f-s" style="left:1028.00px;top:1432.58px;font-size:24.5px;line-height:37px;color:#56575d;letter-spacing:0.640px;-webkit-text-stroke:0.3px #56575d;">Product Viewed through P...</span>
<span class="t f-s" style="left:1454.50px;top:1428.58px;font-size:24.5px;line-height:37px;color:#56575d;letter-spacing:0.339px;-webkit-text-stroke:0.3px #56575d;">$organic</span>
<span class="t f-m" style="left:1846.59px;top:1429.98px;font-size:24.5px;line-height:37px;color:#56575d;letter-spacing:0.300px;">16.03%</span>
<span class="t f-m" style="left:2071.69px;top:1429.98px;font-size:24.5px;line-height:37px;color:#56575d;letter-spacing:0.300px;">2.63%</span>
<span class="t f-m" style="left:2322.90px;top:1429.98px;font-size:24.5px;line-height:37px;color:#56575d;letter-spacing:0.300px;">5%</span>
<span class="t f-m" style="left:2529.10px;top:1429.98px;font-size:24.5px;line-height:37px;color:#56575d;letter-spacing:0.300px;">8%</span>
<span class="t f-m" style="left:2720.30px;top:1429.98px;font-size:24.5px;line-height:37px;color:#56575d;letter-spacing:0.300px;">10%</span>
<span class="t f-m" style="left:2896.49px;top:1429.98px;font-size:24.5px;line-height:37px;color:#56575d;letter-spacing:0.300px;">5.36%</span>
<span class="t f-m" style="left:3087.69px;top:1429.98px;font-size:24.5px;line-height:37px;color:#56575d;letter-spacing:0.300px;">12.82%</span>
<span class="t f-m" style="left:3293.89px;top:1429.98px;font-size:24.5px;line-height:37px;color:#56575d;letter-spacing:0.300px;">19.51%</span>
<span class="t f-m" style="left:3515.09px;top:1429.98px;font-size:24.5px;line-height:37px;color:#56575d;letter-spacing:0.300px;">9.76%</span>
<span class="t f-m" style="left:3706.29px;top:1429.98px;font-size:24.5px;line-height:37px;color:#56575d;letter-spacing:0.300px;">20.59%</span>
<span class="t f-s" style="left:1454.50px;top:1496.88px;font-size:24.5px;line-height:37px;color:#56575d;letter-spacing:0.334px;-webkit-text-stroke:0.3px #56575d;">sidebar</span>
<span class="t f-m" style="left:1846.59px;top:1498.28px;font-size:24.5px;line-height:37px;color:#56575d;letter-spacing:0.300px;">15.92%</span>
<span class="t f-m" style="left:2116.70px;top:1498.28px;font-size:24.5px;line-height:37px;color:#56575d;letter-spacing:0.300px;">0%</span>
<span class="t f-m" style="left:2277.89px;top:1498.28px;font-size:24.5px;line-height:37px;color:#56575d;letter-spacing:0.300px;">12.9%</span>
<span class="t f-m" style="left:2484.09px;top:1498.28px;font-size:24.5px;line-height:37px;color:#56575d;letter-spacing:0.300px;">9.38%</span>
<span class="t f-m" style="left:2675.29px;top:1498.28px;font-size:24.5px;line-height:37px;color:#56575d;letter-spacing:0.300px;">15.15%</span>
<span class="t f-m" style="left:2881.49px;top:1498.28px;font-size:24.5px;line-height:37px;color:#56575d;letter-spacing:0.300px;">14.29%</span>
<span class="t f-m" style="left:3132.70px;top:1498.28px;font-size:24.5px;line-height:37px;color:#56575d;letter-spacing:0.300px;">10%</span>
<span class="t f-m" style="left:3308.89px;top:1498.28px;font-size:24.5px;line-height:37px;color:#56575d;letter-spacing:0.300px;">6.06%</span>
<span class="t f-m" style="left:3500.09px;top:1498.28px;font-size:24.5px;line-height:37px;color:#56575d;letter-spacing:0.300px;">11.76%</span>
<span class="t f-m" style="left:3706.29px;top:1498.28px;font-size:24.5px;line-height:37px;color:#56575d;letter-spacing:0.300px;">18.18%</span>
<span class="t f-s" style="left:1454.50px;top:1562.88px;font-size:24.5px;line-height:37px;color:#56575d;letter-spacing:0.118px;-webkit-text-stroke:0.3px #56575d;">search</span>
<span class="t f-m" style="left:1846.59px;top:1564.28px;font-size:24.5px;line-height:37px;color:#56575d;letter-spacing:0.300px;">14.85%</span>
<span class="t f-m" style="left:2071.69px;top:1564.28px;font-size:24.5px;line-height:37px;color:#56575d;letter-spacing:0.300px;">5.88%</span>
<span class="t f-m" style="left:2277.89px;top:1564.28px;font-size:24.5px;line-height:37px;color:#56575d;letter-spacing:0.300px;">5.26%</span>
<span class="t f-m" style="left:2484.09px;top:1564.28px;font-size:24.5px;line-height:37px;color:#56575d;letter-spacing:0.300px;">6.25%</span>
<span class="t f-m" style="left:2690.29px;top:1564.28px;font-size:24.5px;line-height:37px;color:#56575d;letter-spacing:0.300px;">5.56%</span>
<span class="t f-m" style="left:2941.50px;top:1564.28px;font-size:24.5px;line-height:37px;color:#56575d;letter-spacing:0.300px;">0%</span>
<span class="t f-m" style="left:3087.69px;top:1564.28px;font-size:24.5px;line-height:37px;color:#56575d;letter-spacing:0.300px;">11.11%</span>
<span class="t f-m" style="left:3338.90px;top:1564.28px;font-size:24.5px;line-height:37px;color:#56575d;letter-spacing:0.300px;">12%</span>
<span class="t f-m" style="left:3515.09px;top:1564.28px;font-size:24.5px;line-height:37px;color:#56575d;letter-spacing:0.300px;">9.52%</span>
<span class="t f-m" style="left:3706.29px;top:1564.28px;font-size:24.5px;line-height:37px;color:#56575d;letter-spacing:0.300px;">22.22%</span>
<span class="t f-s" style="left:1453.50px;top:1631.58px;font-size:24.5px;line-height:37px;color:#56575d;letter-spacing:-0.476px;-webkit-text-stroke:0.3px #56575d;">ads</span>
<span class="t f-m" style="left:1846.59px;top:1632.98px;font-size:24.5px;line-height:37px;color:#56575d;letter-spacing:0.300px;">13.91%</span>
<span class="t f-m" style="left:2056.69px;top:1632.98px;font-size:24.5px;line-height:37px;color:#56575d;letter-spacing:0.300px;">33.33%</span>
<span class="t f-m" style="left:2322.90px;top:1632.98px;font-size:24.5px;line-height:37px;color:#56575d;letter-spacing:0.300px;">0%</span>
<span class="t f-m" style="left:2469.09px;top:1632.98px;font-size:24.5px;line-height:37px;color:#56575d;letter-spacing:0.300px;">16.67%</span>
<span class="t f-m" style="left:2735.30px;top:1632.98px;font-size:24.5px;line-height:37px;color:#56575d;letter-spacing:0.300px;">0%</span>
<span class="t f-m" style="left:2941.50px;top:1632.98px;font-size:24.5px;line-height:37px;color:#56575d;letter-spacing:0.300px;">0%</span>
<span class="t f-m" style="left:3147.70px;top:1632.98px;font-size:24.5px;line-height:37px;color:#56575d;letter-spacing:0.300px;">0%</span>
<span class="t f-m" style="left:3353.90px;top:1632.98px;font-size:24.5px;line-height:37px;color:#56575d;letter-spacing:0.300px;">0%</span>
<span class="t f-m" style="left:3500.09px;top:1632.98px;font-size:24.5px;line-height:37px;color:#56575d;letter-spacing:0.300px;">14.29%</span>
<span class="t f-m" style="left:3706.29px;top:1632.98px;font-size:24.5px;line-height:37px;color:#56575d;letter-spacing:0.300px;">16.67%</span>
</section>
<section class="dropdown">
<div class="menu" style="left:3492px;top:179.8px;width:328.2px;height:414.2px"></div>
<div style="position:absolute;left:3507.3px;top:272px;width:297.7px;height:76.6px;border-radius:9px;background:#4F44E0"></div>
<svg class="ic" style="left:3518px;top:215px" width="38" height="38" viewBox="3518 215 38 38" ><g fill="none" stroke="#1d1d26" stroke-width="2.8" stroke-linecap="round" stroke-linejoin="round"><path d="M3522,218.5V243.9a4.5,4.5 0 0 0 4.5,4.5H3552.6"/><path d="M3528.5,222.3V243.8M3535.4,228.2V243.8M3542.2,232.7V243.8M3548.9,237.9V243.8"/></g></svg>
<svg class="ic" style="left:3518px;top:291px" width="38" height="38" viewBox="3518 291 38 38" ><g fill="none" stroke="#fff" stroke-width="2.8" stroke-linecap="round" stroke-linejoin="round"><path d="M3522,295.3V320.90000000000003a4.5,4.5 0 0 0 4.5,4.5H3552.6"/><polyline points="3527.5,318.90000000000003 3537,308.1 3543.6,313.3 3552,304.90000000000003"/></g></svg>
<svg class="ic" style="left:3518px;top:368px" width="38" height="38" viewBox="3518 368 38 38" ><g fill="none" stroke="#1d1d26" stroke-width="2.8" stroke-linecap="round" stroke-linejoin="round"><path d="M3522,371.9V397.5a4.5,4.5 0 0 0 4.5,4.5H3552.6"/><path d="M3527,379.3H3552.4M3527,387.2H3547.4M3527,395.3H3539.4"/></g></svg>
<svg class="ic" style="left:3518px;top:446px" width="38" height="38" viewBox="3518 446 38 38" ><g fill="none" stroke="#1d1d26" stroke-width="2.8" stroke-linecap="round"><path d="M3523.5,458.4H3551.5M3523.5,469.9H3551.5M3535.4,451L3528.6,477.5M3547,451L3540,477.5"/></g></svg>
<svg class="ic" style="left:3518px;top:522px" width="38" height="38" viewBox="3518 522 38 38" ><g fill="none" stroke="#b7b7ba" stroke-width="2.6" stroke-linecap="round" stroke-linejoin="round"><path d="M3522,525.8V551.1999999999999a4.5,4.5 0 0 0 4.5,4.5H3552.4"/><path d="M3527.5,531.7C3537,531.7 3540,548 3551.5,548M3527.5,541.5C3538,541.5 3540,532.2 3551.5,532.2"/></g></svg>
<span class="t f-s" style="left:3572.50px;top:215.28px;font-size:24.5px;line-height:37px;color:#1d1d26;letter-spacing:0.226px;-webkit-text-stroke:0.55px #1d1d26;">Funnel Steps</span>
<span class="t f-s" style="left:3572.20px;top:291.38px;font-size:24.5px;line-height:37px;color:#fff;letter-spacing:1.068px;-webkit-text-stroke:0.55px #fff;">Line</span>
<span class="t f-s" style="left:3572.50px;top:368.78px;font-size:24.5px;line-height:37px;color:#1d1d26;letter-spacing:0.516px;-webkit-text-stroke:0.55px #1d1d26;">Bar</span>
<span class="t f-s" style="left:3572.50px;top:445.78px;font-size:24.5px;line-height:37px;color:#1d1d26;letter-spacing:1.491px;-webkit-text-stroke:0.55px #1d1d26;">Metric</span>
<span class="t f-s" style="left:3574.00px;top:523.08px;font-size:24.5px;line-height:37px;color:#b7b7ba;letter-spacing:0.074px;-webkit-text-stroke:0.3px #b7b7ba;">Top Paths</span>
</section>
<section class="tooltip">
<div class="tip" style="left:3192.4px;top:272px;width:299.8px;height:250.6px"></div>
<svg class="ic" style="left:3490px;top:294px" width="18" height="32" viewBox="3490 294 18 32" ><path d="M3491.5,296.5L3504.8,309.8L3491.5,323Z" fill="#2a282f"/></svg>
<svg class="ic" style="left:3205px;top:285px" width="275" height="158" viewBox="3205 285 275 158" ><rect x="3209.1" y="288.7" width="266.2" height="150.4" rx="5" fill="#fff"/><clipPath id="pc"><rect x="3209.1" y="288.7" width="266.2" height="150.4" rx="5"/></clipPath><g clip-path="url(#pc)"><polyline points="3209.1,408.2 3242.6,354.9 3275.7,346.6 3308.9,418.9 3342.0,406.7 3375.5,335.1 3408.6,310.4 3441.7,396.8 3475.2,414.0" fill="none" stroke="#7856FF" stroke-width="3.6" stroke-linejoin="round"/><polyline points="3209.1,425.8 3242.6,420.0 3275.7,422.7 3308.9,428.4 3342.0,421.9 3375.5,420.0 3408.6,403.7 3441.7,421.9 3475.2,431.5" fill="none" stroke="#FF7557" stroke-width="3.6" stroke-linejoin="round"/><line x1="3408.6" x2="3408.6" y1="288.7" y2="439.1" stroke="#2a282f" stroke-width="3.3"/></g><circle cx="3408.6" cy="310.4" r="6.6" fill="#7856FF" stroke="#2a282f" stroke-width="3.1"/><circle cx="3408.6" cy="403.7" r="6.6" fill="#FF7557" stroke="#2a282f" stroke-width="3.1"/></svg>
<span class="t f-s" style="left:3208.50px;top:451.65px;font-size:21.5px;line-height:32px;color:#fff;letter-spacing:0.550px;-webkit-text-stroke:0.4px #fff;">Line charts display trends</span>
<span class="t f-s" style="left:3209.50px;top:477.65px;font-size:21.5px;line-height:32px;color:#fff;letter-spacing:0.450px;-webkit-text-stroke:0.4px #fff;">over time.</span>
</section>
</body></html>
